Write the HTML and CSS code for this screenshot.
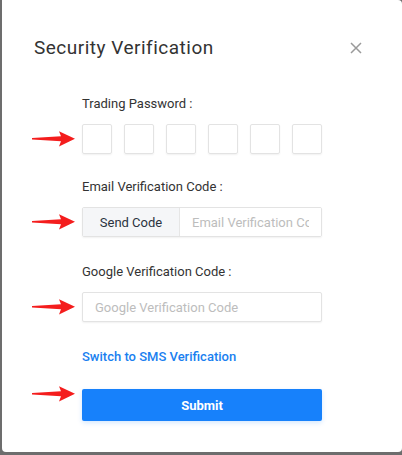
FILE: index.html
```html
<!DOCTYPE html>
<html lang="en">
<head>
<meta charset="utf-8">
<title>Security Verification</title>
<link rel="stylesheet" href="styles.css">
</head>
<body>
<div class="modal">
  <div class="header">
    <h2 class="title">Security Verification</h2>
    <svg class="close" width="12" height="12" viewBox="0 0 12 12"><path d="M1 1L11 11M11 1L1 11" stroke="#9a9a9a" stroke-width="1.5" fill="none"/></svg>
  </div>
  <div class="form">
    <div class="label first">Trading Password :</div>
    <div class="row">
      <svg class="arrow" width="46" height="18" viewBox="0 0 46 18"><polygon points="0,8 29,6.3 27,1.3 43,8.7 27,16.4 29,11.2 0,9.6" fill="#f41d1d"/></svg>
      <div class="pins">
        <div class="pin"></div><div class="pin"></div><div class="pin"></div>
        <div class="pin"></div><div class="pin"></div><div class="pin"></div>
      </div>
    </div>
    <div class="label">Email Verification Code :</div>
    <div class="row">
      <svg class="arrow" width="46" height="18" viewBox="0 0 46 18"><polygon points="0,8 29,6.3 27,1.3 43,8.7 27,16.4 29,11.2 0,9.6" fill="#f41d1d"/></svg>
      <div class="group">
        <div class="addon">Send Code</div>
        <input class="field" type="text" placeholder="Email Verification Code">
      </div>
    </div>
    <div class="label third">Google Verification Code :</div>
    <div class="row">
      <svg class="arrow" width="46" height="18" viewBox="0 0 46 18"><polygon points="0,8 29,6.3 27,1.3 43,8.7 27,16.4 29,11.2 0,9.6" fill="#f41d1d"/></svg>
      <input class="field single" type="text" placeholder="Google Verification Code">
    </div>
    <a class="link" href="#">Switch to SMS Verification</a>
    <div class="row">
      <svg class="arrow" width="46" height="18" viewBox="0 0 46 18"><polygon points="0,8 29,6.3 27,1.3 43,8.7 27,16.4 29,11.2 0,9.6" fill="#f41d1d"/></svg>
      <button class="submit" type="button">Submit</button>
    </div>
  </div>
</div>
</body>
</html>
```
FILE: styles.css
```css
html, body {
  margin: 0;
  padding: 0;
}
body {
  background: #6d6d6d;
  width: 402px;
  height: 455px;
  overflow: hidden;
  font-family: Roboto, "Liberation Sans", sans-serif;
  color: #333;
}
.modal {
  margin-left: 2px;
  width: 400px;
  height: 452px;
  background: #fff;
  border-radius: 0 4px 4px 4px;
  padding-left: 32px;
  box-sizing: border-box;
}
.header {
  display: flex;
  align-items: center;
  justify-content: space-between;
  width: 328px;
  padding-top: 35px;
}
.title {
  margin: 0;
  font-size: 19px;
  font-weight: 400;
  line-height: 26px;
  color: #333;
  letter-spacing: 0.5px;
}
.close {
  display: block;
}
.form {
  margin-left: 48px;
  width: 240px;
  display: flex;
  flex-direction: column;
}
.label {
  font-size: 13px;
  line-height: 18px;
  color: #333;
  margin-top: 24px;
  margin-bottom: 11px;
}
.label.first {
  margin-top: 34px;
}
.label.third {
  margin-top: 26px;
}
.row {
  position: relative;
}
.arrow {
  position: absolute;
  left: -50px;
  top: 50%;
  margin-top: -9px;
}
.pins {
  display: flex;
  justify-content: space-between;
}
.pin {
  width: 30px;
  height: 30px;
  box-sizing: border-box;
  border: 1px solid #e3e3e3;
  border-radius: 2px;
  box-shadow: 0 1px 2px rgba(0,0,0,0.06);
}
.group {
  display: flex;
  height: 30px;
  box-sizing: border-box;
  border: 1px solid #e3e3e3;
  border-radius: 2px;
  box-shadow: 0 1px 2px rgba(0,0,0,0.06);
  overflow: hidden;
}
.addon {
  width: 96px;
  flex: none;
  background: #f5f6f8;
  border-right: 1px solid #e6e6e6;
  font-size: 13px;
  color: #2b3340;
  display: flex;
  align-items: center;
  justify-content: center;
}
.field {
  flex: 1;
  min-width: 0;
  border: none;
  outline: none;
  padding: 0 12px;
  font-family: inherit;
  font-size: 13px;
  color: #333;
  background: #fff;
}
.field::placeholder {
  color: #bdbdbd;
}
.field.single {
  display: block;
  width: 100%;
  height: 30px;
  box-sizing: border-box;
  border: 1px solid #e3e3e3;
  border-radius: 2px;
  box-shadow: 0 1px 2px rgba(0,0,0,0.06);
}
.link {
  margin-top: 26px;
  font-size: 13px;
  line-height: 18px;
  font-weight: 500;
  color: #1a7ff0;
  text-decoration: none;
  align-self: flex-start;
}
.submit {
  display: block;
  margin-top: 23px;
  width: 100%;
  height: 32px;
  border: none;
  border-radius: 2px;
  background: #1781fb;
  color: #fff;
  font-family: inherit;
  font-size: 13px;
  font-weight: 700;
  box-shadow: 0 2px 5px rgba(23,129,251,0.18);
}
```
